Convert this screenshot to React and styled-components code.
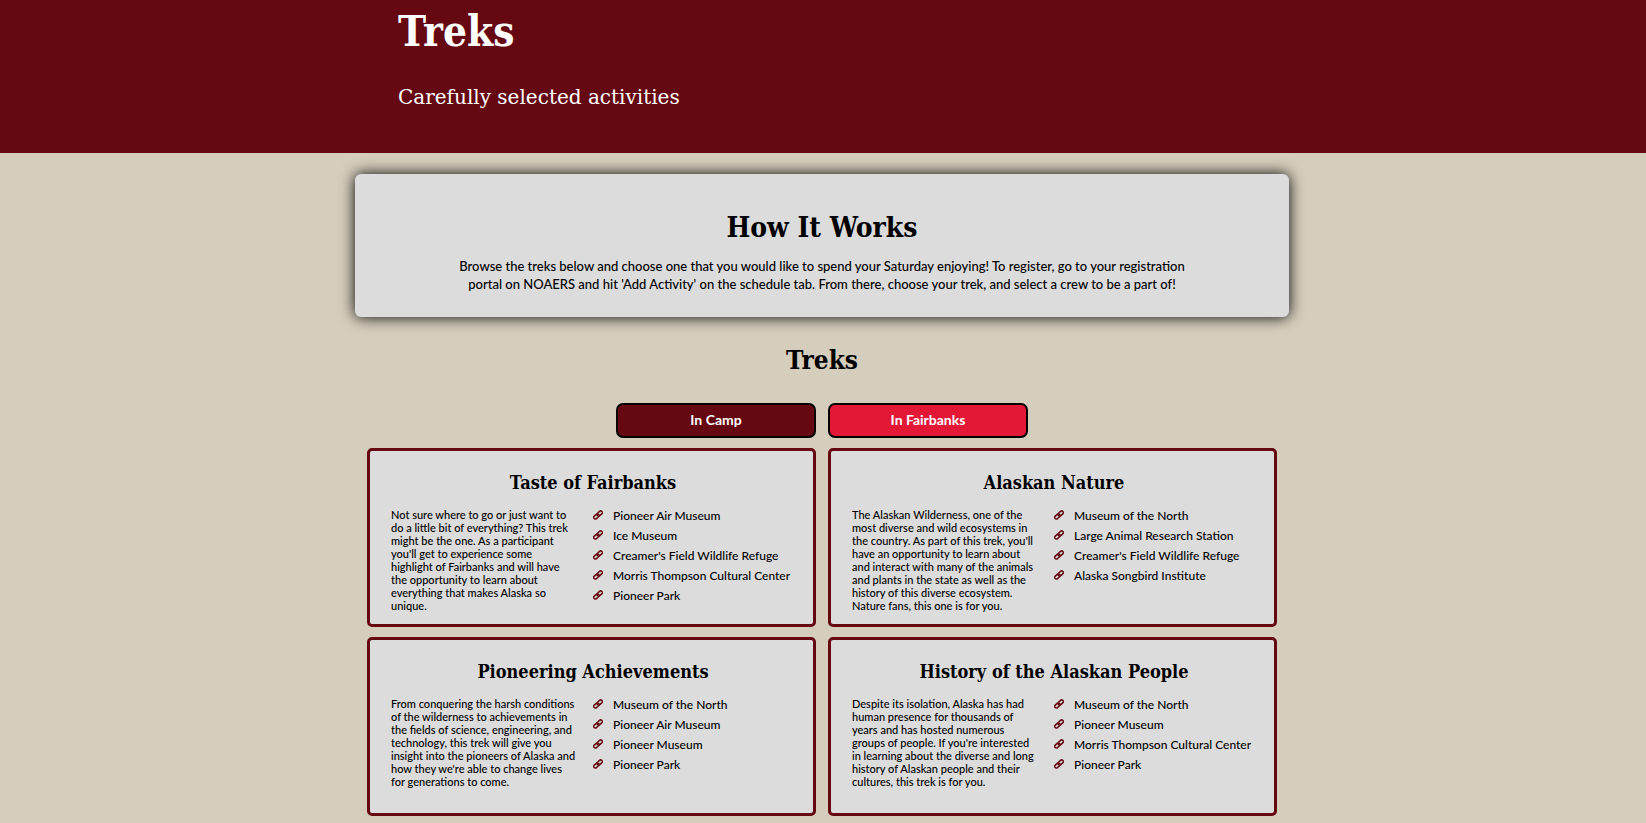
import React, { useState } from "react";
import styled, { createGlobalStyle } from "styled-components";

const maroon = "#650811";
const slab = '"DejaVu Serif Condensed", "DejaVu Serif", serif';
const sans = 'Lato, "Open Sans", sans-serif';

const GlobalStyle = createGlobalStyle`
  * { box-sizing: border-box; }
  body {
    margin: 0;
    background: #d6cebd;
    color: #000;
    font-family: ${sans};
    font-weight: 500;
  }
  h1, h2, h3, p, ul { margin: 0; padding: 0; }
`;

const Header = styled.header`
  background: ${maroon};
  color: #fff;
  padding: 8px 2px 42px 0;
`;

const HeaderInner = styled.div`
  max-width: 848px;
  margin: 0 auto;
  display: flex;
  flex-direction: column;
  gap: 27px;
`;

const PageTitle = styled.h1`
  font: 700 42px/48px ${slab};
`;

const Subtitle = styled.p`
  font: 400 20px/28px "DejaVu Serif", serif;
`;

const Main = styled.main`
  padding: 21px 2px 7px 0;
  display: flex;
  flex-direction: column;
  align-items: center;
`;

const Panel = styled.section`
  width: 100%;
  max-width: 934px;
  padding: 36px 24px 24px;
  border-radius: 6px;
  background: #dcdcdc;
  box-shadow: 0 0 15px #000;
  text-align: center;
`;

const PanelTitle = styled.h2`
  font: 700 28px/36px ${slab};
`;

const PanelText = styled.p`
  max-width: 750px;
  margin: 11px auto 0;
  font-size: 13px;
  line-height: 18px;
`;

const SectionTitle = styled.h2`
  margin: 27px 0;
  font: 700 26px/32px ${slab};
`;

const Tabs = styled.div`
  display: flex;
  gap: 12px;
`;

const Tab = styled.button`
  width: 200px;
  height: 35px;
  padding: 0 0 2px;
  border: 2px solid #000;
  border-radius: 7px;
  background: ${({ $active }) => ($active ? "#e31837" : maroon)};
  color: #fff;
  font: 700 14px/20px ${sans};
  cursor: pointer;
`;

const Cards = styled.div`
  width: 100%;
  max-width: 910px;
  margin-top: 10px;
  display: grid;
  grid-template-columns: 1fr 1fr;
  grid-auto-rows: 1fr;
  gap: 10px 12px;
`;

const Card = styled.article`
  padding: 20px 18px 12px 21px;
  border: 3px solid ${maroon};
  border-radius: 5px;
  background: #dcdcdc;
`;

const CardTitle = styled.h3`
  font: 700 18px/24px ${slab};
  text-align: center;
`;

const CardBody = styled.div`
  margin-top: 10px;
  display: grid;
  grid-template-columns: 190px 1fr;
  gap: 12px;
`;

const Description = styled.p`
  padding-top: 3px;
  font-size: 11px;
  line-height: 13px;
  white-space: pre-line;
`;

const Stops = styled.ul`
  padding-top: 1px;
  list-style: none;
  font-size: 12px;
  line-height: 20px;
`;

const Stop = styled.li`
  display: flex;
  align-items: center;
  gap: 10px;
  white-space: nowrap;
`;

const ChainSvg = styled.svg`
  flex: none;
  width: 10px;
  height: 10px;
  margin-bottom: 2px;
  fill: none;
  stroke: ${maroon};
  stroke-width: 3.6;
`;

/* Two interlocked links of a chain, lying on a diagonal. */
const ChainIcon = () => (
  <ChainSvg viewBox="0 0 24 24" aria-hidden="true">
    <g transform="rotate(-42 12 12)">
      <rect x="-0.5" y="8" width="14.5" height="8" rx="4" />
      <rect x="10" y="8" width="14.5" height="8" rx="4" />
    </g>
  </ChainSvg>
);

const tabs = ["In Camp", "In Fairbanks"];

const treks = [
  {
    title: "Taste of Fairbanks",
    text: `Not sure where to go or just want to
do a little bit of everything? This trek
might be the one. As a participant
you'll get to experience some
highlight of Fairbanks and will have
the opportunity to learn about
everything that makes Alaska so
unique.`,
    stops: ["Pioneer Air Museum", "Ice Museum", "Creamer's Field Wildlife Refuge", "Morris Thompson Cultural Center", "Pioneer Park"],
  },
  {
    title: "Alaskan Nature",
    text: `The Alaskan Wilderness, one of the
most diverse and wild ecosystems in
the country. As part of this trek, you'll
have an opportunity to learn about
and interact with many of the animals
and plants in the state as well as the
history of this diverse ecosystem.
Nature fans, this one is for you.`,
    stops: ["Museum of the North", "Large Animal Research Station", "Creamer's Field Wildlife Refuge", "Alaska Songbird Institute"],
  },
  {
    title: "Pioneering Achievements",
    text: `From conquering the harsh conditions
of the wilderness to achievements in
the fields of science, engineering, and
technology, this trek will give you
insight into the pioneers of Alaska and
how they we're able to change lives
for generations to come.`,
    stops: ["Museum of the North", "Pioneer Air Museum", "Pioneer Museum", "Pioneer Park"],
  },
  {
    title: "History of the Alaskan People",
    text: `Despite its isolation, Alaska has had
human presence for thousands of
years and has hosted numerous
groups of people. If you're interested
in learning about the diverse and long
history of Alaskan people and their
cultures, this trek is for you.`,
    stops: ["Museum of the North", "Pioneer Museum", "Morris Thompson Cultural Center", "Pioneer Park"],
  },
];

export default function App() {
  const [active, setActive] = useState("In Fairbanks");
  return (
    <>
      <GlobalStyle />
      <Header>
        <HeaderInner>
          <PageTitle>Treks</PageTitle>
          <Subtitle>Carefully selected activities</Subtitle>
        </HeaderInner>
      </Header>
      <Main>
        <Panel>
          <PanelTitle>How It Works</PanelTitle>
          <PanelText>
            Browse the treks below and choose one that you would like to spend your Saturday enjoying! To
            register, go to your registration portal on NOAERS and hit 'Add Activity' on the schedule tab. From
            there, choose your trek, and select a crew to be a part of!
          </PanelText>
        </Panel>
        <SectionTitle>Treks</SectionTitle>
        <Tabs>
          {tabs.map((tab) => (
            <Tab key={tab} type="button" $active={tab === active} aria-pressed={tab === active} onClick={() => setActive(tab)}>
              {tab}
            </Tab>
          ))}
        </Tabs>
        <Cards>
          {treks.map((trek) => (
            <Card key={trek.title}>
              <CardTitle>{trek.title}</CardTitle>
              <CardBody>
                <Description>{trek.text}</Description>
                <Stops>
                  {trek.stops.map((stop) => (
                    <Stop key={stop}>
                      <ChainIcon />
                      {stop}
                    </Stop>
                  ))}
                </Stops>
              </CardBody>
            </Card>
          ))}
        </Cards>
      </Main>
    </>
  );
}
